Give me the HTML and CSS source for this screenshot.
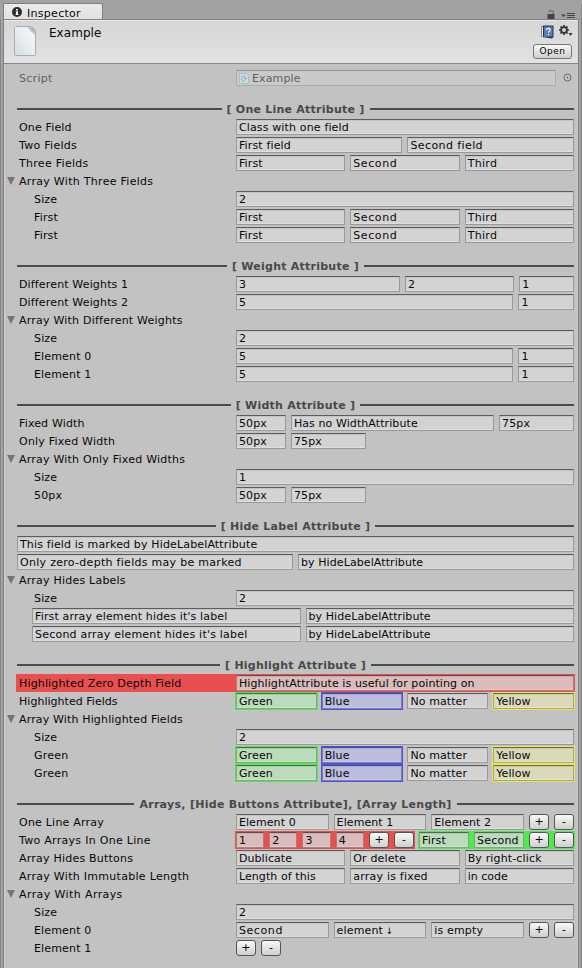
FILE: index.html
```html
<!DOCTYPE html>
<html lang="en">
<head>
<meta charset="utf-8">
<title>Inspector</title>
<link rel="stylesheet" href="styles.css">
</head>
<body>
<div class="tabbar">
  <div class="tab">
    <svg width="10" height="10" viewBox="0 0 10 10"><circle cx="5" cy="5" r="5" fill="#2b2b2b"/><path d="M4 2h2v1.4H4zM3.5 4.2H6V7.2h.7V8H3.4v-.8H4V5h-.5z" fill="#eee"/></svg>
    <span class="t3">Inspector</span>
  </div>
  <div class="tabicons">
    <svg width="8" height="9" viewBox="0 0 8 9"><path d="M.5 4h7v5h-7z" fill="#444"/><path d="M2 2.2C2 .2 6.2.2 6.2 2.2V4" fill="none" stroke="#666" stroke-width="1.2"/></svg>
    <svg class="menu" width="14" height="6" viewBox="0 0 14 6"><path d="M0 1.5h5L2.500 4z" fill="#444"/><path d="M6 .5h8M6 2.500h8M6 4.500h8" stroke="#444"/></svg>
  </div>
</div>
<div class="panel">
  <header class="head">
    <svg class="doc" width="22" height="30" viewBox="0 0 22 30"><defs><linearGradient id="pg" x1="1" y1="0" x2="0" y2="1"><stop offset="0" stop-color="#f6f9fa"/><stop offset=".5" stop-color="#e9eef0"/><stop offset="1" stop-color="#d3dbde"/></linearGradient><linearGradient id="fold" x1="1" y1="0" x2="0" y2="1"><stop offset="0" stop-color="#8b9fae"/><stop offset="1" stop-color="#e6ecef"/></linearGradient></defs><path d="M1.500.5H16Q20.500 1 21.500 5V28.500q0 1-1 1h-19q-1 0-1-1v-27q0-1 1-1z" fill="url(#pg)" stroke="#a9adaf"/><path d="M13 1Q19 1 20.500 3.500L21 9Q19 6.500 16.800 5.500Q15.500 2.500 13 1z" fill="url(#fold)"/></svg>
    <h1>Example</h1>
    <div class="tools">
      <div class="toolrow">
        <svg width="13" height="14" viewBox="0 0 13 14"><path d="M.5 1.500 3 .5h9.500v11.500L11 13.500.5 12z" fill="#1f3555"/><path d="M1 2l1-.5v10.500L1 11.500z" fill="#e8eef4"/><path d="M3 1.500h8.500v10l-8.500 .5z" fill="#5a7fae"/><path d="M5.500 5q.2-1.700 1.900-1.700T9.200 5q0 .9-1 1.300-.7.4-.7 1.500M7.500 9v1.300" fill="none" stroke="#fff" stroke-width="1.200"/></svg>
        <svg width="14" height="12" viewBox="0 0 14 12"><circle cx="5" cy="5" r="2.900" fill="none" stroke="#333" stroke-width="1.800"/><g stroke="#333" stroke-width="1.700"><path d="M5 0v2M5 8v2M0 5h2M8 5h2M1.500 1.500l1.300 1.300M7.200 7.200l1.300 1.300M1.500 8.500l1.300-1.300M7.200 2.800l1.300-1.300"/></g><path d="M9.500 8h4l-2 3z" fill="#333"/></svg>
      </div>
      <button class="open">Open</button>
    </div>
  </header>
  <main>
    <div class="row script"><span class="label t3">Script</span><div class="fields"><div class="f"><svg width="10" height="11" viewBox="0 0 10 11"><path d="M.5.5h7l2 2v8h-9z" fill="#d0d9dd" stroke="#b2bdc2"/><path d="M6 3.500Q2.500 2.500 2.500 5.500T6 8M5 5.500h3M6.500 4v3" fill="none" stroke="#7ab8cc"/></svg>Example</div><svg class="pick" width="9" height="9" viewBox="0 0 9 9"><circle cx="4.500" cy="4.500" r="3.500" fill="none" stroke="#606060" stroke-width=".9"/><circle cx="4.500" cy="4.500" r=".8" fill="#555"/></svg></div></div>

    <h2><span>[ One Line Attribute ]</span></h2>
    <div class="row"><span class="label">One Field</span><div class="fields"><div class="f">Class with one field</div></div></div>
    <div class="row"><span class="label t3">Two Fields</span><div class="fields"><div class="f">First field</div><div class="f t4">Second field</div></div></div>
    <div class="row"><span class="label t3">Three Fields</span><div class="fields"><div class="f">First</div><div class="f t6">Second</div><div class="f t3">Third</div></div></div>
    <div class="row fold"><span class="label t3">Array With Three Fields</span></div>
    <div class="row sub"><span class="label">Size</span><div class="fields"><div class="f">2</div></div></div>
    <div class="row sub"><span class="label">First</span><div class="fields"><div class="f">First</div><div class="f t6">Second</div><div class="f t3">Third</div></div></div>
    <div class="row sub"><span class="label">First</span><div class="fields"><div class="f">First</div><div class="f t6">Second</div><div class="f t3">Third</div></div></div>

    <h2><span>[ Weight Attribute ]</span></h2>
    <div class="row"><span class="label">Different Weights 1</span><div class="fields weights-321"><div class="f">3</div><div class="f">2</div><div class="f">1</div></div></div>
    <div class="row"><span class="label">Different Weights 2</span><div class="fields weights-51"><div class="f">5</div><div class="f">1</div></div></div>
    <div class="row fold"><span class="label t2">Array With Different Weights</span></div>
    <div class="row sub"><span class="label">Size</span><div class="fields"><div class="f">2</div></div></div>
    <div class="row sub"><span class="label">Element 0</span><div class="fields weights-51"><div class="f">5</div><div class="f">1</div></div></div>
    <div class="row sub"><span class="label">Element 1</span><div class="fields weights-51"><div class="f">5</div><div class="f">1</div></div></div>

    <h2><span>[ Width Attribute ]</span></h2>
    <div class="row"><span class="label">Fixed Width</span><div class="fields"><div class="f px50">50px</div><div class="f t1">Has no WidthAttribute</div><div class="f px75">75px</div></div></div>
    <div class="row"><span class="label t2">Only Fixed Width</span><div class="fields"><div class="f px50">50px</div><div class="f px75">75px</div></div></div>
    <div class="row fold"><span class="label t2">Array With Only Fixed Widths</span></div>
    <div class="row sub"><span class="label">Size</span><div class="fields"><div class="f">1</div></div></div>
    <div class="row sub"><span class="label">50px</span><div class="fields"><div class="f px50">50px</div><div class="f px75">75px</div></div></div>

    <h2><span>[ Hide Label Attribute ]</span></h2>
    <div class="row bare"><div class="fields"><div class="f">This field is marked by HideLabelAttribute</div></div></div>
    <div class="row bare"><div class="fields"><div class="f t3">Only zero-depth fields may be marked</div><div class="f t1">by HideLabelAttribute</div></div></div>
    <div class="row fold"><span class="label t2">Array Hides Labels</span></div>
    <div class="row sub"><span class="label">Size</span><div class="fields"><div class="f">2</div></div></div>
    <div class="row bare sub"><div class="fields"><div class="f">First array element hides it's label</div><div class="f t1">by HideLabelAttribute</div></div></div>
    <div class="row bare sub"><div class="fields"><div class="f t2">Second array element hides it's label</div><div class="f t1">by HideLabelAttribute</div></div></div>

    <h2><span>[ Highlight Attribute ]</span></h2>
    <div class="row hot"><span class="label">Highlighted Zero Depth Field</span><div class="fields"><div class="f tint-r t1">HighlightAttribute is useful for pointing on</div></div></div>
    <div class="row"><span class="label t0">Highlighted Fields</span><div class="fields"><div class="f tint-g ring">Green</div><div class="f tint-b ring">Blue</div><div class="f t1">No matter</div><div class="f tint-y ring t1">Yellow</div></div></div>
    <div class="row fold"><span class="label">Array With Highlighted Fields</span></div>
    <div class="row sub"><span class="label">Size</span><div class="fields"><div class="f">2</div></div></div>
    <div class="row sub"><span class="label t2">Green</span><div class="fields"><div class="f tint-g ring">Green</div><div class="f tint-b ring">Blue</div><div class="f t1">No matter</div><div class="f tint-y ring t1">Yellow</div></div></div>
    <div class="row sub"><span class="label t2">Green</span><div class="fields"><div class="f tint-g ring">Green</div><div class="f tint-b ring">Blue</div><div class="f t1">No matter</div><div class="f tint-y ring t1">Yellow</div></div></div>

    <h2><span class="t3">Arrays, [Hide Buttons Attribute], [Array Length]</span></h2>
    <div class="row"><span class="label t2">One Line Array</span><div class="fields"><div class="f t1">Element 0</div><div class="f t1">Element 1</div><div class="f t1">Element 2</div><button>+</button><button>-</button></div></div>
    <div class="row"><span class="label t3">Two Arrays In One Line</span><div class="fields"><div class="group red"><div class="f tint-r">1</div><div class="f tint-r">2</div><div class="f tint-r">3</div><div class="f tint-r">4</div><button>+</button><button>-</button></div><div class="group green"><div class="f tint-g">First</div><div class="f tint-g t2">Second</div><button>+</button><button>-</button></div></div></div>
    <div class="row"><span class="label t2">Array Hides Buttons</span><div class="fields"><div class="f t1">Dublicate</div><div class="f">Or delete</div><div class="f">By right-click</div></div></div>
    <div class="row"><span class="label t3">Array With Immutable Length</span><div class="fields"><div class="f t1">Length of this</div><div class="f t2">array is fixed</div><div class="f t0">in code</div></div></div>
    <div class="row fold"><span class="label t4">Array With Arrays</span></div>
    <div class="row sub"><span class="label">Size</span><div class="fields"><div class="f">2</div></div></div>
    <div class="row sub"><span class="label">Element 0</span><div class="fields"><div class="f t6">Second</div><div class="f">element <span class="arrow">↓</span></div><div class="f">is empty</div><button>+</button><button>-</button></div></div>
    <div class="row sub"><span class="label">Element 1</span><div class="fields"><button>+</button><button>-</button></div></div>
  </main>
</div>
</body>
</html>
```
FILE: styles.css
```css
* { box-sizing: border-box; }
html, body { margin: 0; }
body {
  width: 582px;
  height: 968px;
  overflow: hidden;
  display: flex;
  flex-direction: column;
  background:
    linear-gradient(#858585, #858585) 0 19px / 1px 100% no-repeat,
    linear-gradient(#858585, #858585) 100% 4px / 1px 100% no-repeat,
    #a2a2a2;
  font: 11px/16px "DejaVu Sans", Verdana, sans-serif;
  letter-spacing: .15px;
  color: #080808;
}
svg { display: block; flex: none; }

/* Tracking steps */
.t0 { letter-spacing: .03px; }
.t1 { letter-spacing: .09px; }
.t2 { letter-spacing: .22px; }
.t3 { letter-spacing: .29px; }
.t4 { letter-spacing: .4px; }
.t6 { letter-spacing: .6px; }

.tabbar {
  height: 19px;
  flex: none;
  display: flex;
  justify-content: space-between;
  padding: 3px 7px 0 3px;
}
.tab {
  width: 100px;
  height: 17px;
  display: flex;
  gap: 5px;
  padding: 3px 0 0 8px;
  background: linear-gradient(#ebebeb, #e0e0e0);
  border: 1px solid #808080;
  border-bottom: 0;
  border-radius: 2px 2px 0 0;
  line-height: 13px;
}
.tabicons { display: flex; gap: 6px; padding-top: 6px; align-items: center; }
.menu { margin-top: 3px; }
.panel {
  flex: 1;
  margin: 0 3px;
  background: #c2c2c2;
  border: 1px solid #808080;
  border-bottom: 0;
  box-shadow: inset 1px 0 #cecece, inset -1px 0 #cecece;
}
.head {
  height: 44px;
  display: flex;
  padding: 6px 6px 0 10px;
  background: linear-gradient(#d6d6d6, #e2e2e2);
  border-bottom: 1px solid #858585;
  box-shadow: inset 0 1px #e8e8e8;
}
h1 { flex: 1; margin: -1px 0 0 13px; font: 12px/16px "DejaVu Sans", sans-serif; letter-spacing: .04px; }
.tools { display: flex; flex-direction: column; align-items: flex-end; gap: 5px; margin-top: -1px; }
.toolrow { display: flex; gap: 5px; margin-right: -1px; }
main { padding: 5px 4px 0 12px; }
.row { height: 18px; display: flex; align-items: center; padding: 0 0 0 3px; position: relative; }
.label { width: 216.9px; flex: none; padding-top: 2px; white-space: nowrap; }
.sub { padding-left: 18px; }
.sub .label { width: 201.9px; }
.bare { padding-left: 1px; }
.bare.sub { padding-left: 16px; }
.fold::before {
  content: "";
  position: absolute;
  left: -9px;
  top: 5px;
  border: solid transparent;
  border-width: 8px 4.500px 0;
  border-top-color: #757575;
}
.fields { flex: 1; min-width: 0; display: flex; gap: 5px; }
.weights-321 { display: grid; grid-template-columns: 3fr 2fr 1fr; }
.weights-51 { display: grid; grid-template-columns: 5fr 1fr; }
.f {
  flex: 1 1 0;
  min-width: 0;
  height: 16px;
  padding: 0 2px;
  border: 1px solid #999;
  border-top-color: #5c5c5c;
  background: #d3d3d3;
  box-shadow: inset 0 1px #c4c4c4, inset 0 -1px #dedede;
  line-height: 16px;
  white-space: nowrap;
}
.px50 { flex: none; width: 50px; }
.px75 { flex: none; width: 75px; }
.script { color: #616161; }
.script .f { display: flex; gap: 3px; background: #cacaca; border-color: #acacac; border-top-color: #919191; box-shadow: none; }
.script .f svg { margin-top: 2px; }
.pick { margin: 3px 2px 0 2px; }
h2 {
  height: 31px;
  margin: 0 0 0 1px;
  padding-top: 13px;
  display: flex;
  align-items: center;
  gap: 5px;
  color: #484848;
  font: bold 11px/16px "DejaVu Sans", sans-serif;
  letter-spacing: .24px;
  white-space: nowrap;
}
h2 span { padding-top: 2px; }
h2::before, h2::after { content: ""; flex: 1; height: 2px; background: #4c4c4c; }
button {
  width: 20px;
  height: 16px;
  padding: 0;
  flex: none;
  border: 1px solid #555;
  border-radius: 3px;
  background: linear-gradient(#f8f8f8, #cfcfcf);
  font: 11px/14px "DejaVu Sans", sans-serif;
  color: #000;
}
.open { width: 39px; height: 15px; font-size: 9px; line-height: 13px; letter-spacing: .5px; border-color: #777; }
.arrow { font-size: 9px; margin-left: -1px; }
.hot { background: #e94f4f; margin-right: -1px; padding-right: 1px; }
.tint-r { background: #dbbcbc; border-color: #a98080; border-top-color: #6c4a4a; box-shadow: inset 0 1px #cbacac, inset 0 -1px #e6c9c9; }
.tint-g { background: #bcdbbc; border-color: #80a580; border-top-color: #4a6c4a; box-shadow: inset 0 1px #accbac, inset 0 -1px #c9e6c9; }
.tint-b { background: #bcbcdb; border-color: #8080aa; border-top-color: #4a4a80; box-shadow: inset 0 1px #acaccb, inset 0 -1px #c9c9e6; }
.tint-y { background: #dadabb; border-color: #a5a580; border-top-color: #6c6c4a; box-shadow: inset 0 1px #cacaab, inset 0 -1px #e6e6c9; }
.ring { outline: 1px solid #4ee94e; }
.ring.tint-b { outline-color: #4e4ee9; }
.ring.tint-y { outline-color: #e9e94e; }
.group { display: flex; gap: 5px; flex: 1; background: #e94f4f; box-shadow: 0 0 0 1px #e94f4f; }
.green { flex: none; width: 155px; background: #4ee94e; box-shadow: 0 0 0 1px #4ee94e; }
```
